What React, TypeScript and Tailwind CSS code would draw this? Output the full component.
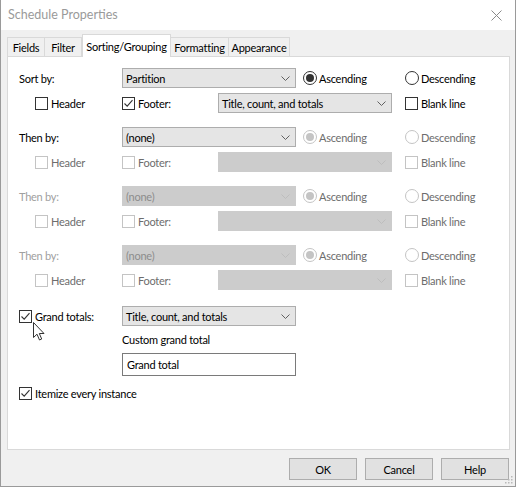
import React from 'react';

const font = { fontFamily: '"Lato", "Liberation Sans", sans-serif' };

const CheckBox: React.FC<{ checked?: boolean; disabled?: boolean }> = ({ checked, disabled }) => (
  <span
    className={`flex h-[13px] w-[13px] shrink-0 items-center justify-center border bg-white ${
      disabled ? 'border-[#c4c4c4]' : 'border-[#333333]'
    }`}
  >
    {checked && (
      <svg width="11" height="11" viewBox="0 0 11 11">
        <path d="M1.5 5.5 L4.2 8.2 L9.5 2.2" fill="none" stroke="#333333" strokeWidth="1.1" />
      </svg>
    )}
  </span>
);

const Radio: React.FC<{ checked?: boolean; disabled?: boolean }> = ({ checked, disabled }) => (
  <span
    className={`flex h-[14px] w-[14px] shrink-0 items-center justify-center rounded-full border bg-white ${
      disabled ? 'border-[#c4c4c4]' : 'border-[#333333]'
    }`}
  >
    {checked && (
      <span className={`h-[8px] w-[8px] rounded-full ${disabled ? 'bg-[#c4c4c4]' : 'bg-[#333333]'}`} />
    )}
  </span>
);

const Chevron: React.FC<{ disabled?: boolean }> = ({ disabled }) => (
  <svg width="9" height="5" viewBox="0 0 9 5" className="shrink-0">
    <path d="M0.5 0.5 L4.5 4.5 L8.5 0.5" fill="none" stroke={disabled ? '#bdbdbd' : '#606060'} strokeWidth="1" />
  </svg>
);

const Combo: React.FC<{ text?: string; disabled?: boolean }> = ({ text, disabled }) => (
  <div
    className={`flex h-[20px] w-[174px] shrink-0 items-center justify-between border pl-[3px] pr-[5px] ${
      disabled ? 'border-[#cccccc] bg-[#cccccc] text-[#8d8d8d]' : 'border-[#adadad] bg-[#e5e5e5] text-black'
    }`}
  >
    <span>{text}</span>
    <Chevron disabled={disabled} />
  </div>
);

interface SortBlockProps {
  label: string;
  value?: string;
  labelDisabled?: boolean;
  comboDisabled?: boolean;
  optsDisabled?: boolean;
  ascending?: boolean;
  footer?: boolean;
  footerText?: string;
}

const SortBlock: React.FC<SortBlockProps> = ({ label, value, labelDisabled, comboDisabled, optsDisabled, ascending, footer, footerText }) => {
  const optText = optsDisabled ? 'text-[#6d6d6d]' : 'text-black';
  return (
    <div className="flex flex-col gap-[5px]">
      <div className="flex h-[20px] items-center">
        <span className={`w-[103px] shrink-0 ${labelDisabled ? 'text-[#a0a0a0]' : 'text-black'}`}>{label}</span>
        <Combo text={value} disabled={comboDisabled} />
        <div className="ml-[7px] flex w-[102px] items-center gap-[2px]">
          <Radio checked={ascending} disabled={optsDisabled} />
          <span className={optText}>Ascending</span>
        </div>
        <div className="flex items-center gap-[2px]">
          <Radio disabled={optsDisabled} />
          <span className={optText}>Descending</span>
        </div>
      </div>
      <div className="flex h-[20px] items-center">
        <div className="flex w-[103px] shrink-0 items-center gap-[3px] pl-[16px]">
          <CheckBox disabled={optsDisabled} />
          <span className={optText}>Header</span>
        </div>
        <div className="flex w-[96px] shrink-0 items-center gap-[3px]">
          <CheckBox checked={footer} disabled={optsDisabled} />
          <span className={optText}>Footer:</span>
        </div>
        <Combo text={footerText} disabled={optsDisabled} />
        <div className="ml-[13px] flex items-center gap-[3px]">
          <CheckBox disabled={optsDisabled} />
          <span className={optText}>Blank line</span>
        </div>
      </div>
    </div>
  );
};

const tabs = ['Fields', 'Filter', 'Sorting/Grouping', 'Formatting', 'Appearance'];
const tabWidths: Record<string, string> = {
  Fields: 'w-[38px]',
  Filter: 'w-[38px]',
  'Sorting/Grouping': 'w-[89px]',
  Formatting: 'w-[59px]',
  Appearance: 'w-[62px]',
};

const App: React.FC = () => {
  return (
    <div
      className="relative flex h-[487px] w-[516px] flex-col border-x border-b border-[#9a9a9a] bg-[#f0f0f0] text-[11px] leading-none tracking-[-0.25px]"
      style={font}
    >
      {/* title bar */}
      <div className="flex h-[30px] items-center justify-between bg-white pl-[7px] pr-[13px]">
        <span className="text-[12.5px] tracking-normal text-[#9a9a9a]">Schedule Properties</span>
        <svg width="11" height="11" viewBox="0 0 11 11">
          <path d="M0.5 0.5 L10.5 10.5 M10.5 0.5 L0.5 10.5" stroke="#8a8a8a" strokeWidth="1" />
        </svg>
      </div>

      {/* tabs */}
      <div className="ml-[6px] mt-[4px] flex h-[22px] items-end">
        {tabs.map((t) =>
          t === 'Sorting/Grouping' ? (
            <div
              key={t}
              className={`relative z-10 -mb-px flex h-[23px] items-center justify-center border border-b-0 border-[#d9d9d9] bg-white text-black ${tabWidths[t]}`}
            >
              {t}
            </div>
          ) : (
            <div
              key={t}
              className={`-ml-px flex h-[19px] items-center justify-center border border-b-0 border-[#d9d9d9] bg-[#f0f0f0] text-black first:ml-0 ${tabWidths[t]}`}
            >
              {t}
            </div>
          )
        )}
      </div>

      {/* panel */}
      <div className="ml-[6px] flex h-[394px] w-[503px] flex-col border border-[#d9d9d9] bg-white px-[11px] pt-[11px]">
        <div className="flex flex-col gap-[14px]">
          <SortBlock label="Sort by:" value="Partition" ascending footer footerText="Title, count, and totals" />
          <SortBlock label="Then by:" value="(none)" ascending optsDisabled />
          <SortBlock label="Then by:" value="(none)" ascending labelDisabled comboDisabled optsDisabled />
          <SortBlock label="Then by:" value="(none)" ascending labelDisabled comboDisabled optsDisabled />
        </div>

        <div className="mt-[16px] flex h-[20px] items-center">
          <div className="flex w-[103px] shrink-0 items-center gap-[3px]">
            <CheckBox checked />
            <span>Grand totals:</span>
          </div>
          <Combo text="Title, count, and totals" />
        </div>
        <div className="ml-[103px] mt-[8px] h-[14px]">Custom grand total</div>
        <div className="ml-[103px] mt-[5px] flex h-[23px] w-[174px] items-center border border-[#7a7a7a] pl-[4px]">
          Grand total
        </div>
        <div className="mt-[11px] flex items-center gap-[3px]">
          <CheckBox checked />
          <span>Itemize every instance</span>
        </div>
      </div>

      {/* buttons */}
      <div className="mr-[6px] mt-[8px] flex justify-end gap-[8px]">
        {['OK', 'Cancel', 'Help'].map((b) => (
          <button key={b} className="h-[22px] w-[68px] border border-[#adadad] bg-[#e1e1e1] text-black">
            {b}
          </button>
        ))}
      </div>

      {/* resize grip */}
      <svg width="8" height="8" viewBox="0 0 8 8" className="absolute bottom-[2px] right-[2px]">
        <rect x="6" y="0" width="1.5" height="1.5" fill="#b8b8b8" />
        <rect x="3" y="3" width="1.5" height="1.5" fill="#b8b8b8" />
        <rect x="6" y="3" width="1.5" height="1.5" fill="#b8b8b8" />
        <rect x="0" y="6" width="1.5" height="1.5" fill="#b8b8b8" />
        <rect x="3" y="6" width="1.5" height="1.5" fill="#b8b8b8" />
        <rect x="6" y="6" width="1.5" height="1.5" fill="#b8b8b8" />
      </svg>

      {/* mouse cursor */}
      <svg width="13" height="20" viewBox="0 0 13 20" className="absolute left-[32px] top-[322px]">
        <path
          d="M0.5 0.5 L0.5 15.5 L4 12.2 L6.5 18 L8.7 17 L6.3 11.5 L11 11.5 Z"
          fill="white"
          stroke="#333333"
          strokeWidth="1"
          strokeLinejoin="round"
        />
      </svg>
    </div>
  );
};

export default App;
